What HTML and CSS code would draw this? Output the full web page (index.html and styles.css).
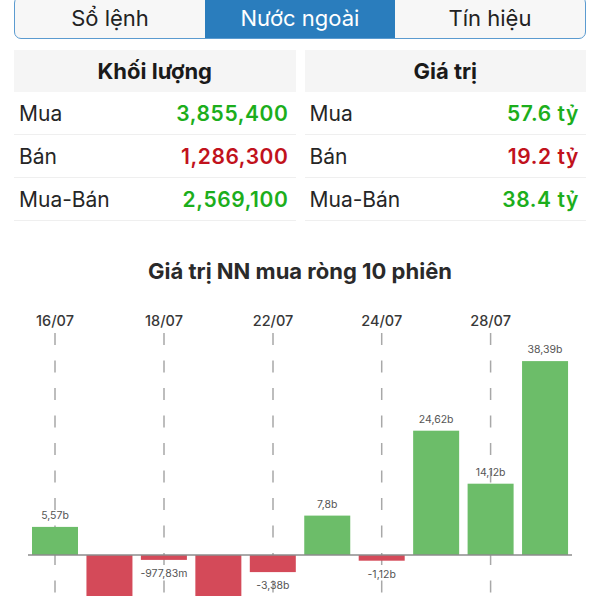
FILE: index.html
```html
<!DOCTYPE html>
<html lang="vi">
<head>
<meta charset="utf-8">
<title>Nước ngoài</title>
<link rel="stylesheet" href="styles.css">
</head>
<body>
<div class="page">
  <div class="seg">
    <div class="seg-tab">Sổ lệnh</div>
    <div class="seg-tab active">Nước ngoài</div>
    <div class="seg-tab">Tín hiệu</div>
  </div>

  <div class="stats">
    <div class="col">
      <div class="col-head">Khối lượng</div>
      <div class="row"><span class="lbl">Mua</span><span class="val up">3,855,400</span></div>
      <div class="row"><span class="lbl">Bán</span><span class="val down">1,286,300</span></div>
      <div class="row"><span class="lbl">Mua-Bán</span><span class="val up">2,569,100</span></div>
    </div>
    <div class="col">
      <div class="col-head">Giá trị</div>
      <div class="row"><span class="lbl">Mua</span><span class="val up">57.6 tỷ</span></div>
      <div class="row"><span class="lbl">Bán</span><span class="val down">19.2 tỷ</span></div>
      <div class="row"><span class="lbl">Mua-Bán</span><span class="val up">38.4 tỷ</span></div>
    </div>
  </div>

  <h2 class="chart-title">Giá trị NN mua ròng 10 phiên</h2>

  <svg class="chart" width="600" height="310" viewBox="0 0 600 310">
    <g class="dates">
      <text x="55" y="36">16/07</text>
      <text x="164" y="36">18/07</text>
      <text x="273" y="36">22/07</text>
      <text x="381.7" y="36">24/07</text>
      <text x="490.6" y="36">28/07</text>
    </g>
    <g class="grid">
      <line x1="55" y1="43" x2="55" y2="310"/>
      <line x1="164" y1="43" x2="164" y2="310"/>
      <line x1="273" y1="43" x2="273" y2="310"/>
      <line x1="381.7" y1="43" x2="381.7" y2="310"/>
      <line x1="490.6" y1="43" x2="490.6" y2="310"/>
    </g>
    <g class="bars">
      <rect class="pos" x="32" y="236.9" width="46" height="28.1"/>
      <rect class="neg" x="86.45" y="265" width="46" height="60.6"/>
      <rect class="neg" x="140.9" y="265" width="46" height="4.9"/>
      <rect class="neg" x="195.35" y="265" width="46" height="55.6"/>
      <rect class="neg" x="249.8" y="265" width="46" height="17.1"/>
      <rect class="pos" x="304.25" y="225.6" width="46" height="39.4"/>
      <rect class="neg" x="358.7" y="265" width="46" height="5.7"/>
      <rect class="pos" x="413.15" y="140.7" width="46" height="124.3"/>
      <rect class="pos" x="467.6" y="193.7" width="46" height="71.3"/>
      <rect class="pos" x="522.05" y="71.1" width="46" height="193.9"/>
    </g>
    <line class="axis" x1="28" y1="265" x2="572" y2="265"/>
    <g class="vals">
      <text x="55" y="228.9">5,57b</text>
      <text x="163.9" y="287">-977,83m</text>
      <text x="272.8" y="299">-3,38b</text>
      <text x="327.25" y="217.6">7,8b</text>
      <text x="381.7" y="287.7">-1,12b</text>
      <text x="436.15" y="132.7">24,62b</text>
      <text x="490.6" y="185.7">14,12b</text>
      <text x="545.05" y="63.1">38,39b</text>
    </g>
  </svg>
</div>
</body>
</html>
```

FILE: styles.css
```css
html, body {
  margin: 0;
  padding: 0;
  overflow: hidden;
  background: #ffffff;
}

.page {
  width: 600px;
  height: 600px;
  font-family: Inter, "Liberation Sans", "Noto Sans", sans-serif;
  color: #1f1f1f;
}

.seg {
  margin: -4px 14px 0;
  height: 43px;
  box-sizing: border-box;
  border: 1.5px solid #5b9bd0;
  border-radius: 7px;
  overflow: hidden;
  display: grid;
  grid-template-columns: 1fr 1fr 1fr;
  background: #f7f7f7;
}

.seg-tab {
  display: flex;
  align-items: center;
  justify-content: center;
  font-size: 22px;
  color: #222;
}

.seg-tab.active {
  background: #2a7dbd;
  color: #ffffff;
}

.stats {
  margin: 11px 14px 0;
  display: grid;
  grid-template-columns: 1fr 1fr;
  column-gap: 9px;
}

.col-head {
  height: 42px;
  background: #f5f5f5;
  display: flex;
  align-items: center;
  justify-content: center;
  font-size: 22px;
  font-weight: 700;
  color: #1a1a1a;
}

.row {
  height: 43px;
  box-sizing: border-box;
  border-bottom: 1px solid #efefef;
  display: flex;
  align-items: center;
  justify-content: space-between;
  padding: 0 7px 0 5px;
  font-size: 21px;
}

.lbl {
  color: #262626;
}

.val {
  font-weight: 600;
  letter-spacing: 0.6px;
}

.val.up { color: #1cae1c; }
.val.down { color: #c1121c; }

.chart-title {
  margin: 37px 0 6px;
  height: 26px;
  line-height: 26px;
  text-align: center;
  font-size: 22px;
  font-weight: 700;
  color: #2a2a2a;
}

.chart {
  display: block;
}

.chart .dates text {
  font-family: Inter, "Liberation Sans", sans-serif;
  font-size: 14.5px;
  font-weight: 500;
  fill: #383838;
  text-anchor: middle;
}

.chart .grid line {
  stroke: #a8a8a8;
  stroke-width: 1.5;
  stroke-dasharray: 12 15.5;
}

.chart .pos { fill: #6cbd69; }
.chart .neg { fill: #d44a59; }

.chart .axis {
  stroke: #8c8c8c;
  stroke-width: 1.5;
}

.chart .vals text {
  font-family: Inter, "Liberation Sans", sans-serif;
  font-size: 10.5px;
  fill: #555;
  text-anchor: middle;
}
```
